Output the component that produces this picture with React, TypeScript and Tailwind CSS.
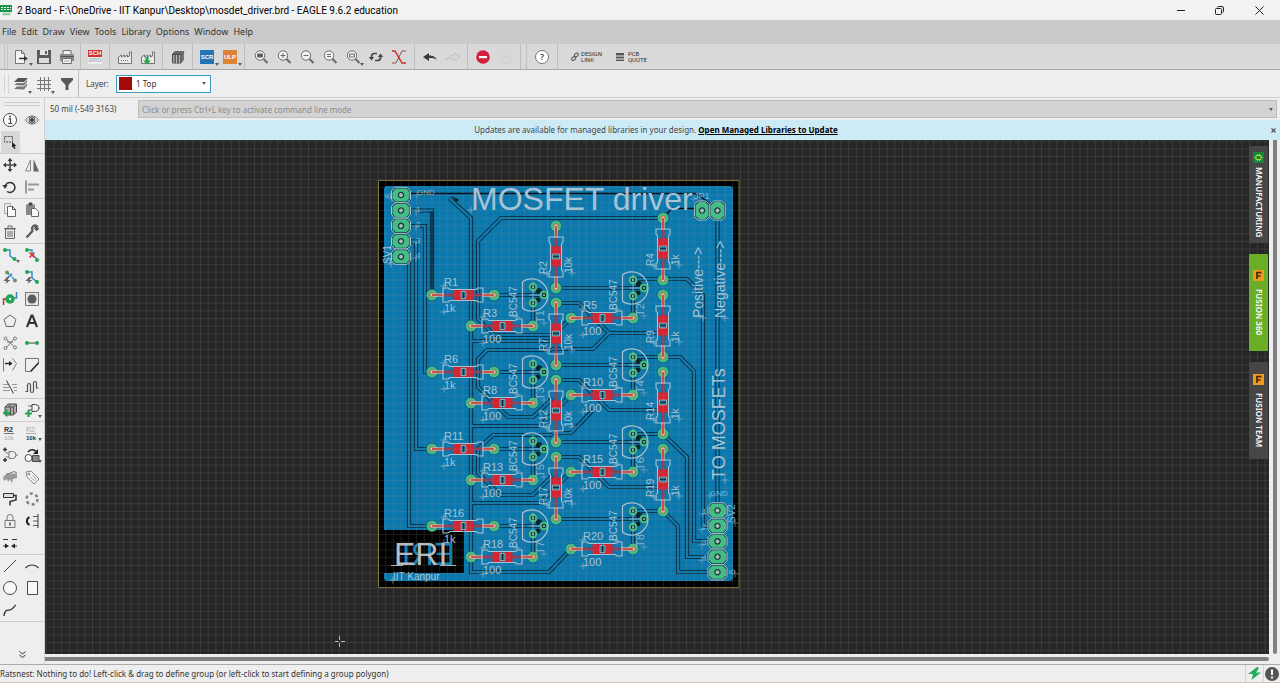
import React, { type ReactNode } from "react";

const PITCH = 15.43;

/* ---------- small building blocks ---------- */

function Ico({ children, stroke = "#4a4a4a", w = 1 }: { children: ReactNode; stroke?: string; w?: number }) {
  return (
    <svg className="size-4 shrink-0" viewBox="0 0 16 16" fill="none" stroke={stroke} strokeWidth={w} aria-hidden="true">
      {children}
    </svg>
  );
}

function Tool({ name, menu, active, children }: { name: string; menu?: boolean; active?: boolean; children: ReactNode }) {
  return (
    <button
      type="button"
      aria-label={name}
      title={name}
      className={`relative flex h-full w-[23px] shrink-0 items-center justify-center ${active ? "bg-[#d8d8d8]" : ""}`}
    >
      {children}
      {menu && (
        <svg className="absolute right-0 bottom-[3px] h-[3px] w-1" viewBox="0 0 5 4" aria-hidden="true">
          <path d="M0 0h5L2.500 4z" fill="#555" />
        </svg>
      )}
    </button>
  );
}

function Group({ className, children }: { className: string; children?: ReactNode }) {
  return <div className={`flex h-full shrink-0 items-center justify-center border-r border-[#bdbdbd] ${className}`}>{children}</div>;
}

function Lens({ children }: { children?: ReactNode }) {
  return (
    <Ico stroke="#6a6a6a">
      <circle cx="7" cy="6.500" r="4.700" fill="#f2f2f2" />
      <path d="M10.500 10l4 4" strokeWidth="1.900" />
      {children}
    </Ico>
  );
}

/* ---------- main toolbar ---------- */

function MainToolbar() {
  return (
    <div role="toolbar" aria-label="Actions" className="flex h-[26px] shrink-0 items-center border-b border-[#a9a9a9] bg-[#d9d9d9]">
      <div className="ml-1 h-full w-1 border-x border-[#c6c6c6]" />
      <Group className="w-[73px]">
        <Tool name="New" menu>
          <Ico stroke="#777">
            <path d="M2.500 1.500h6l3 3v10h-9z" fill="#f4f4f4" />
            <path d="M8.500 1.500v3h3" />
            <path d="M6 9.500h6" stroke="#333" strokeWidth="1.500" />
            <path d="M11 7l4 2.500-4 2.500z" fill="#333" stroke="none" />
          </Ico>
        </Tool>
        <Tool name="Save">
          <Ico stroke="none">
            <path d="M1 1h14v14H1z" fill="#5c5c5c" />
            <path d="M4 1h8v5H4z" fill="#e4e4e4" />
            <path d="M9 2h2v3H9z" fill="#5c5c5c" />
            <path d="M3 9h10v5H3z" fill="#dcdcdc" />
          </Ico>
        </Tool>
        <Tool name="Print">
          <Ico stroke="#6e6e6e">
            <path d="M4 5V1.500h8V5" fill="#efefef" />
            <path d="M1 5h14v7H1z" fill="#8a8a8a" stroke="none" />
            <path d="M1 7.500h14" stroke="#555" />
            <path d="M3.500 9.500h9v5h-9z" fill="#f4f4f4" />
            <path d="M5 12h6" stroke="#aaa" />
          </Ico>
        </Tool>
      </Group>
      <Group className="w-[29px]">
        <Tool name="Schematic">
          <span className="flex w-[14px] flex-col text-center font-['Liberation_Sans'] text-[6px] leading-[7px] font-bold">
            <span className="bg-[#cf2f36] text-white">SCH</span>
            <span className="bg-[#eeeeee] text-[#b4b4b4]">BRD</span>
          </span>
        </Tool>
      </Group>
      <Group className="w-[53px]">
        <Tool name="CAM processor">
          <Ico stroke="#777">
            <path d="M1.500 14.500V8l3-2v2l3-2v2l3-2v2l2-1V3h2v11.500z" fill="#e9e9e9" />
            <path d="M4 11.500h7" strokeDasharray="1 1" />
          </Ico>
        </Tool>
        <Tool name="Generate CAM data">
          <Ico stroke="#777">
            <path d="M1.500 14.500V8l3-2v2l3-2v2l3-2v2l2-1V3h2v11.500z" fill="#e9e9e9" />
            <path d="M5.500 8h3v3.500h2.500L7 15.500 3 11.500h2.500z" fill="#22a848" stroke="none" />
          </Ico>
        </Tool>
      </Group>
      <Group className="w-[30px]">
        <Tool name="Library manager">
          <Ico stroke="#555">
            <path d="M2 5l3-3h9v9l-3 3H2z" fill="#777" stroke="none" />
            <path d="M2.500 5.500h8.500v8.500H2.500zM5 5.500V14M8 5.500V14M11 5.500l3-3M2.500 5.500l3-3M5.500 5l3-3M8.500 5l3-3" stroke="#4c4c4c" />
            <path d="M3.800 6v8M6.500 6v8M9.500 6v8" stroke="#bbb" />
          </Ico>
        </Tool>
      </Group>
      <Group className="w-[52px]">
        <Tool name="Run script" menu>
          <span className="h-[14px] w-[14px] bg-[#2474b8] text-center font-['Liberation_Sans'] text-[6px] leading-[14px] font-bold text-white">SCR</span>
        </Tool>
        <Tool name="Run ULP" menu>
          <span className="h-[14px] w-[14px] bg-[#de8234] text-center font-['Liberation_Sans'] text-[6px] leading-[14px] font-bold text-white">ULP</span>
        </Tool>
      </Group>
      <Group className="w-[170px]">
        <Tool name="Zoom to fit"><Lens><path d="M4.500 5h5v3h-5z" fill="#555" /></Lens></Tool>
        <Tool name="Zoom in"><Lens><path d="M4.500 6.500h5M7 4v5" /></Lens></Tool>
        <Tool name="Zoom out"><Lens><path d="M4.500 6.500h5" /></Lens></Tool>
        <Tool name="Zoom redraw"><Lens><path d="M5 5.500h4M5 7.500h4" /></Lens></Tool>
        <Tool name="Zoom select" menu><Lens><path d="M4.500 5h5v3h-5z" /></Lens></Tool>
        <Tool name="Redraw">
          <Ico stroke="#444" w={1.6}>
            <path d="M3.500 8.500V7a3 3 0 0 1 3-2.500H9M12.500 7.500V9a3 3 0 0 1-3 2.500H7" />
            <path d="M.8 8h5.400L3.500 11.500zM9.800 8h5.400L12.500 4.500z" fill="#444" stroke="none" />
          </Ico>
        </Tool>
        <Tool name="Ratsnest">
          <Ico>
            <path d="M15 2h-4L5 14H1" stroke="#7e5a58" />
            <path d="M1 2h3l7 12h4" stroke="#cf2a20" strokeWidth="1.400" />
          </Ico>
        </Tool>
      </Group>
      <Group className="w-[53px]">
        <Tool name="Undo"><Ico stroke="none"><path d="M1 8l6-4v2.500c4 0 6 1 8 4.500-2-1.800-4-2-8-2V12z" fill="#3a3a3a" /></Ico></Tool>
        <Tool name="Redo"><Ico stroke="#c2c2c2"><path d="M15 8L9 4v2.500C5 6.500 3 7.500 1 11c2-1.800 4-2 8-2V12z" /></Ico></Tool>
      </Group>
      <Group className="w-[53px]">
        <Tool name="Stop">
          <Ico stroke="none"><circle cx="8" cy="8" r="6.800" fill="#d51f3e" /><path d="M4 7h8v2.200H4z" fill="#fff" /></Ico>
        </Tool>
        <Tool name="Go"><Ico stroke="#cecece"><circle cx="8" cy="8" r="6.300" /><path d="M5 8h5M8 5l3 3-3 3" /></Ico></Tool>
      </Group>
      <Group className="w-[6px]" />
      <Group className="w-[31px]">
        <Tool name="Help">
          <span className="flex size-[14px] items-center justify-center rounded-full border border-[#777] bg-white font-['Open_Sans'] text-[9px] leading-none font-semibold text-[#333]">?</span>
        </Tool>
      </Group>
      <button type="button" className="ml-[13px] flex items-center gap-0.5 text-left font-['Roboto'] text-[6px] leading-[6px] text-[#333]">
        <svg className="h-2.5 w-2" viewBox="0 0 8 10" fill="none" stroke="#555" aria-hidden="true">
          <ellipse cx="5.300" cy="3" rx="1.500" ry="2.300" transform="rotate(45 5.300 3)" />
          <ellipse cx="2.700" cy="6.500" rx="1.500" ry="2.300" transform="rotate(45 2.700 6.500)" />
        </svg>
        <span>DESIGN<br />LINK</span>
      </button>
      <button type="button" className="ml-[14px] flex items-center gap-1 text-left font-['Roboto'] text-[6px] leading-[6px] text-[#333]">
        <svg className="size-2" viewBox="0 0 8 8" aria-hidden="true">
          <path d="M0 0h8v8H0z" fill="#a2a2a2" /><path d="M0 0h8v2H0zM0 4h8v1H0zM0 7h8v1H0z" fill="#555" />
        </svg>
        <span>PCB<br />QUOTE</span>
      </button>
    </div>
  );
}

function LayerBar() {
  return (
    <div className="flex h-[28px] shrink-0 items-center border-b border-[#d2d2d2] bg-[#eeeeee]">
      <div className="ml-1 h-5 w-[5px] border-x border-[#d6d6d6]" />
      <Group className="h-6 w-[70px]">
        <Tool name="Layer settings" menu>
          <Ico stroke="none">
            <path d="M5 2h10l-4 4H1z" fill="#555" />
            <path d="M1 9l3-2h7l3-3v2l-3 3.500z" fill="#777" />
            <path d="M1 13l3-2.500h7l3-3v2L11 13.500z" fill="#777" />
          </Ico>
        </Tool>
        <Tool name="Grid" menu><Ico stroke="#777"><path d="M4.500 1v14M8.500 1v14M12.500 1v14M1 4.500h14M1 8.500h14M1 12.500h14" /></Ico></Tool>
        <Tool name="Selection filter"><Ico stroke="none"><path d="M2 2h12v2L9.500 9v5h-3V9L2 4z" fill="#595959" /></Ico></Tool>
      </Group>
      <label htmlFor="layer" className="ml-[7px] w-[30px] text-[8px] text-[#444]">Layer:</label>
      <div className="relative flex h-[18px] w-[95px] items-center border border-[#3b9cc4] bg-white">
        <span className="ml-0.5 size-[13px] shrink-0 bg-[#a30a0a]" />
        <select id="layer" className="h-full w-full appearance-none bg-transparent pl-1 text-[8px] text-[#333] outline-none">
          <option>1 Top</option>
          <option>16 Bottom</option>
        </select>
        <svg className="pointer-events-none absolute right-1 h-[3px] w-1" viewBox="0 0 5 4" aria-hidden="true"><path d="M0 0h5L2.500 4z" fill="#555" /></svg>
      </div>
    </div>
  );
}

/* ---------- tool palette ---------- */

type Item = { name: string; art: ReactNode; menu?: boolean; active?: boolean } | null;
const G = "#1fa850";
const B = "#2a86cc";

const plug = <path d="M5 4.500h3.500a3.500 3.500 0 0 1 0 7H5zM1.500 6h3.500M1.500 10h3.500M12 8h3" />;

const PALETTE: Item[][] = [
  [
    { name: "Info", art: <><circle cx="8" cy="8" r="6.500" fill="#fff" /><path d="M6.500 6.800h2v4.700M6.200 11.500h4" strokeWidth="1.200" /><circle cx="8" cy="4.500" r="1" fill="#444" stroke="none" /></> },
    { name: "Show", art: <><path d="M1.500 8c3.500-5.300 9.500-5.300 13 0-3.500 5.300-9.500 5.300-13 0z" stroke="#666" /><circle cx="8" cy="8" r="3" /><circle cx="8" cy="8" r="1.500" fill="#333" /></> },
    { name: "Group", active: true, art: <><path d="M2.500 2.500h8v5.500h-8z" strokeDasharray="2 1" /><path d="M10 8l4.500 4h-2l1 2.500-1.500.5-1-2.500-1 1z" fill="#222" stroke="none" /></> },
    null,
  ],
  [
    { name: "Move", art: <><path d="M8 3v10M3 8h10" strokeWidth="1.600" /><path d="M8 1l2.500 3h-5zM8 15l2.500-3h-5zM1 8l3-2.500v5zM15 8l-3-2.500v5z" fill="#333" stroke="none" /></> },
    { name: "Mirror", art: <><path d="M6.500 3v11h-5z" stroke="#888" /><path d="M9.500 2v12.500H15z" fill="#666" stroke="none" /></> },
    { name: "Rotate", art: <><path d="M5 12.500a5 5 0 1 0-2-5" strokeWidth="1.500" stroke="#333" /><path d="M.5 6h5L3 10z" fill="#333" stroke="none" /></> },
    { name: "Align", art: <><path d="M2 1.500v13" /><path d="M4 4.500h11v2H4zM4 9.500h6v2H4z" fill="#999" stroke="none" /></> },
  ],
  [
    { name: "Copy", art: <><path d="M2.500 1.500h6v10h-6z" stroke="#aaa" /><path d="M5.500 4.500h5l3 3v7h-8z" fill="#fff" stroke="#666" /><path d="M10.500 4.500v3h3" /></> },
    { name: "Paste", art: <><path d="M2 2.500h9V13H2z" fill="#888" stroke="none" /><path d="M5 1h3v2H5z" fill="#444" /><path d="M7.500 6.500h4l3 3v5h-7z" fill="#fff" stroke="#666" /></> },
    { name: "Delete", art: <path d="M3.500 5h9v9.500h-9zM2 4.500h12M6 4V2h4v2M6 7v6M8 7v6M10 7v6" stroke="#666" /> },
    { name: "Change", art: <path d="M2.500 13.500l6.500-7M9 6.500a2.600 2.600 0 0 1 4-4L11.500 4.500l1 1.200L14.500 4" strokeWidth="2.300" stroke="#5c5c5c" /> },
  ],
  [
    { name: "Route", menu: true, art: <><path d="M3 3h5v6l4 3" stroke={B} strokeWidth="1.400" /><circle cx="3" cy="3" r="2" fill={G} stroke="none" /><circle cx="12.500" cy="12" r="2" fill={G} stroke="none" /></> },
    { name: "Ripup", art: <><path d="M3 3h5l0 4 5 5" stroke={B} strokeWidth="1.300" /><circle cx="3" cy="3" r="2" fill={G} stroke="none" /><circle cx="13" cy="13" r="2" fill={G} stroke="none" /><path d="M5.500 5.500l5 5M10.500 5.500l-5 5" stroke="#d33" strokeWidth="1.600" /></> },
    { name: "Multi route", art: <><circle cx="5" cy="3.500" r="2" fill="#6b9b4a" stroke="none" /><circle cx="13" cy="11.500" r="2" fill="#6b9b4a" stroke="none" /><path d="M6 4l7 7M6 8l4-3" stroke={B} strokeDasharray="2 1" strokeWidth="1.600" /><path d="M5 8L1.500 12h3l-1 3 5-4H5.500l2-3z" fill="#666" stroke="none" /></> },
    { name: "Autorouter", art: <><path d="M3 3h5v6l4 3h2" stroke={B} strokeWidth="1.400" /><circle cx="3" cy="3" r="2" fill={G} stroke="none" /><circle cx="13" cy="13" r="2" fill={G} stroke="none" /><path d="M5 8L1.500 12h3l-1 3 5-4H5.500l2-3z" fill="#666" stroke="none" /></> },
    { name: "Via", art: <><path d="M1.500 14V8h4" stroke="#b33" strokeWidth="1.500" /><path d="M14.500 1v6h-4" stroke={B} strokeWidth="1.500" /><circle cx="8" cy="8" r="4.700" fill={G} stroke="none" /><circle cx="8" cy="8" r="1.200" fill="#fff" stroke="none" /></> },
    { name: "Hole", art: <><path d="M1.500 1.500h13v13h-13z" fill="#e4e4e4" stroke="#777" /><circle cx="8" cy="8" r="4.500" fill="#5c5c5c" stroke="none" /></> },
    { name: "Polygon", art: <path d="M8 2l6 4.500-2.300 7H4.300L2 6.500z" stroke="#666" /> },
    { name: "Text", art: <path d="M3 14L7.500 2.500h1L13 14M5 10h6" stroke="#333" strokeWidth="2.100" /> },
    { name: "Ratsnest", art: <g stroke="#777"><path d="M3.500 3.500l9 8.500M12.500 3.500L4 13M5 7h6" /><circle cx="3.500" cy="3.500" r="1.500" fill="#eee" /><circle cx="13" cy="3.500" r="1.500" fill="#eee" /><circle cx="3.500" cy="13" r="1.500" fill="#eee" /><circle cx="13" cy="12.500" r="1.500" fill="#eee" /></g> },
    { name: "Signal", art: <><path d="M2 8h12" /><circle cx="3" cy="8" r="2" fill={G} stroke="none" /><circle cx="13" cy="8" r="2" fill={G} stroke="none" /></> },
    { name: "Optimize", art: <><path d="M1.500 1.500v13M10.500 1.500l4 5-4 7" stroke="#777" /><path d="M3 6.500h6" stroke="#222" strokeWidth="1.400" /><path d="M7 4l3.500 2.500L7 9z" fill="#222" stroke="none" /></> },
    { name: "Miter", art: <><path d="M1.500 14.500v-13h13v5M1.500 14.500h5" stroke="#777" /><path d="M6.500 14.500l8-8.500" strokeWidth="1.500" stroke="#222" /></> },
    { name: "Split", art: <><path d="M1 5.500h5M1 8.500h6M1 11.500h7M10 5.500h5M11 8.500h4M12 11.500h3" stroke="#999" /><path d="M4.500 1.500l7 13" stroke="#333" /></> },
    { name: "Meander", art: <path d="M1.500 12.500h2V6a1.500 1.500 0 0 1 3 0v6a1.500 1.500 0 0 0 3 0V4a1.500 1.500 0 0 1 3 0v5h2" stroke="#555" strokeWidth="1.200" /> },
  ],
  [
    { name: "Add part", art: <><path d="M3 5l3-3h8.500v8l-3 3H3z" fill="#aaa" /><path d="M3 5h8.500v8M11.500 5l3-3M6 5l3-3M8.500 5V13" stroke="#555" /><path d="M1 11h7M4.500 7.500v7" stroke={G} strokeWidth="2.200" /></> },
    { name: "Add symbol", menu: true, art: <><g transform="translate(3 -2)">{plug}</g><path d="M1 11.500h7M4.500 8v7" stroke={G} strokeWidth="2.200" /></> },
  ],
  [
    { name: "Name", art: <><text x="2" y="7" fontSize="7" fontWeight="700" fontFamily="Liberation Sans" fill="#333" stroke="none">R2</text><path d="M2 8.500h10" stroke="#777" /><text x="2" y="15" fontSize="6" fontFamily="Liberation Sans" fill="#aaa" stroke="none">10k</text></> },
    { name: "Value", menu: true, art: <><text x="2" y="7" fontSize="7" fontFamily="Liberation Sans" fill="#aaa" stroke="none">R2</text><path d="M2 8.500h10" stroke="#aaa" /><text x="2" y="15" fontSize="6" fontWeight="700" fontFamily="Liberation Sans" fill="#333" stroke="none">10k</text></> },
    { name: "Smash", art: <><path d="M1 2.500h4M3 .5v4M1 13h4M3 11v4" stroke="#333" strokeWidth="1.400" /><g transform="translate(2 0)" stroke="#777">{plug}</g></> },
    { name: "Replace", menu: true, art: <><circle cx="4.500" cy="11" r="3.500" fill="#fff" /><path d="M8.500 8.500H15v6H8.500z" fill="#888" /><path d="M4 5c2-3 6-3 8-.5" stroke="#222" strokeWidth="1.500" /><path d="M14 2v5H9z" fill="#222" stroke="none" /></> },
    { name: "Pinswap", art: <><path d="M1 8l4-3.500h10V9l-4 1-1 4-2-3.500L6 13l-1-3-3 2z" fill="#999" stroke="none" /><path d="M4 5.500l8-3 3 1.500" stroke="#777" /></> },
    { name: "Attribute", art: <><path d="M2 3l5-1 8 8-5 5-7-7z" fill="#f7f7f7" stroke="#888" /><circle cx="5" cy="5" r="1" stroke="#777" /><path d="M6.500 8l4 4M8.500 6.500l4 4" stroke="#999" /></> },
    { name: "Paint", art: <><path d="M1.500 2.500h10v4h-10z" fill="#ddd" stroke="#333" /><path d="M11.500 4.500H14V9L8 10.500V14.500" stroke="#333" strokeWidth="1.500" /></> },
    { name: "Arrange", art: <circle cx="8" cy="8" r="5.500" stroke="#808080" strokeWidth="2.500" strokeDasharray="3 2.760" /> },
    { name: "Lock", art: <><path d="M3 7.500h10v7H3zM5 7V4.500a3 3 0 0 1 6 0V7" stroke="#777" /><path d="M8 9.500v3" strokeWidth="1.500" /></> },
    { name: "Flip", art: <><path d="M5.500 4c-3.500 2-3.500 6 0 8" stroke="#222" strokeWidth="2" /><path d="M9 3.500h5M9 8h5M9 12.500h5M14 1v14" stroke="#555" strokeWidth="1.200" /></> },
    { name: "Gap", art: <><path d="M1 4.500h5M10 4.500h5M1 11h3M12 11h3" stroke="#333" /><path d="M3 8.500L7 11l-4 2.500zM13 8.500L9 11l4 2.500z" fill="#222" stroke="none" /></> },
    null,
  ],
  [
    { name: "Line", art: <path d="M2 14L14 2" stroke="#444" /> },
    { name: "Arc", art: <path d="M1.500 10c3.500-4 9.500-4 13 0" stroke="#444" strokeWidth="1.200" /> },
    { name: "Circle", art: <circle cx="8" cy="8" r="6.500" fill="#f8f8f8" /> },
    { name: "Rectangle", art: <path d="M3.500 1.500h10v13h-10z" fill="#f8f8f8" /> },
    { name: "Spline", art: <path d="M2 14c1-8 4-5 7-6.500C12 6 12 4 14 3" stroke="#333" strokeWidth="1.300" /> },
    null,
  ],
];

function Palette() {
  return (
    <aside role="toolbar" aria-label="Tools" className="flex w-[45px] shrink-0 flex-col border-r border-[#d0d0d0] bg-[#eeeeee]">
      <div className="mx-1 mt-[4px] mb-[3px] h-[4px] shrink-0 border-y border-[#cccccc]" />
      {PALETTE.map((items, i) => (
        <div key={i} className="grid shrink-0 grid-cols-[20px_24px] border-b border-[#cccccc]">
          {items.map((it, j) => (
            <div key={j} className="flex h-[22px] justify-center [&>button]:w-[19px]">
              {it && (
                <Tool name={it.name} menu={it.menu} active={it.active}>
                  <Ico>{it.art}</Ico>
                </Tool>
              )}
            </div>
          ))}
        </div>
      ))}
      <button type="button" aria-label="More tools" className="mt-auto mb-1 flex h-3 shrink-0 items-center justify-center">
        <svg className="size-[7px]" viewBox="0 0 7 7" fill="none" stroke="#333" aria-hidden="true"><path d="M.5.500l3 2.500 3-2.500M.5 4l3 2.500 3-2.500" /></svg>
      </button>
    </aside>
  );
}

/* ---------- circuit board ---------- */

const TRACES = [
  "M401 210.500H432V295",
  "M401 226H425V372H432",
  "M401 241.500H416V449H432",
  "M401 257H409V526H432",
  "M449 198L471 218V572H549L571 549",
  "M663 218H501L478 241V319L494 335H552",
  "M471 341H552",
  "M552 350H487L478 359V387L508 417H533L553 398",
  "M471 426H540L553 413",
  "M552 435H493L478 449V473L500 495H533L553 475",
  "M471 503H540L553 490",
  "M556 303H579L609 333H663M609 333L593 349H552",
  "M556 380H579L609 410H663M593 410L571 433H552",
  "M556 457H579L609 487H663",
  "M571 318L552 337",
  "M571 395L552 414",
  "M571 472L552 491",
  "M494 295H544",
  "M494 372H544",
  "M494 449H544",
  "M494 526H544",
  "M556 288H645",
  "M556 365H645",
  "M556 442H645",
  "M556 519H645",
  "M533 303V326",
  "M533 380V403",
  "M533 457V480",
  "M533 534V557",
  "M633 295V318",
  "M633 372V395",
  "M633 449V472",
  "M633 526V549",
  "M633 279H687L703 295V526H717",
  "M633 357H680L694 371V541H717",
  "M633 434H663L687 457V557H717",
  "M633 511H663L678 526V572H717",
  "M717.500 210V572",
].join("");

const SILK = "#a8c6d8";
const PAD = "#43bd86";

type Part = { x: number; y: number; name: string; value: string; up?: boolean };
const RESISTORS: Part[] = [
  { x: 463, y: 295, name: "R1", value: "1k" },
  { x: 502, y: 326, name: "R3", value: "100" },
  { x: 463, y: 372, name: "R6", value: "1k" },
  { x: 502, y: 403, name: "R8", value: "100" },
  { x: 463, y: 449, name: "R11", value: "1k" },
  { x: 502, y: 480, name: "R13", value: "100" },
  { x: 463, y: 526, name: "R16", value: "1k" },
  { x: 502, y: 557, name: "R18", value: "100" },
  { x: 602, y: 318, name: "R5", value: "100" },
  { x: 602, y: 395, name: "R10", value: "100" },
  { x: 602, y: 472, name: "R15", value: "100" },
  { x: 602, y: 549, name: "R20", value: "100" },
  { x: 556, y: 257, name: "R2", value: "10k", up: true },
  { x: 556, y: 334, name: "R7", value: "10k", up: true },
  { x: 556, y: 411, name: "R12", value: "10k", up: true },
  { x: 556, y: 488, name: "R17", value: "10k", up: true },
  { x: 663, y: 249, name: "R4", value: "1k", up: true },
  { x: 663, y: 326, name: "R9", value: "1k", up: true },
  { x: 663, y: 403, name: "R14", value: "1k", up: true },
  { x: 663, y: 480, name: "R19", value: "1k", up: true },
];

const TRANSISTORS: Part[] = [
  { x: 533, y: 295, name: "T1", value: "BC547" },
  { x: 533, y: 372, name: "T3", value: "BC547" },
  { x: 533, y: 449, name: "T5", value: "BC547" },
  { x: 533, y: 526, name: "T7", value: "BC547" },
  { x: 633, y: 288, name: "T2", value: "BC547" },
  { x: 633, y: 365, name: "T4", value: "BC547" },
  { x: 633, y: 442, name: "T6", value: "BC547" },
  { x: 633, y: 519, name: "T8", value: "BC547" },
];

function Label({ x, y, size = 10, up, dim, children }: { x: number; y: number; size?: number; up?: boolean; dim?: boolean; children: ReactNode }) {
  return (
    <g transform={`translate(${x} ${y})${up ? " rotate(-90)" : ""}`} opacity={dim ? 0.8 : 1}>
      <path d="M-3.500 0h7M0-3.500v7" stroke={SILK} strokeWidth="0.800" opacity="0.750" />
      <text fontSize={size} fill={SILK} stroke="none">{children}</text>
    </g>
  );
}

function Resistor({ x, y, name, value, up }: Part) {
  return (
    <g>
      <g transform={`translate(${x} ${y})${up ? " rotate(-90)" : ""}`}>
        <circle cx="-31" r="5.800" fill={PAD} stroke="#07566a" strokeWidth="0.600" />
        <circle cx="31" r="5.800" fill={PAD} stroke="#07566a" strokeWidth="0.600" />
        <circle cx="-31" r="2.200" fill="#e6d3b0" stroke="#b9603c" />
        <circle cx="31" r="2.200" fill="#e6d3b0" stroke="#b9603c" />
        <path d="M-31 0h12M19 0h12" stroke="#c9b3a4" strokeWidth="3.400" />
        <path d="M-31 0h12M19 0h12" stroke="#cf2f28" strokeWidth="1.600" />
        <path d="M-19 0h10M9 0h10" stroke="#8d3c58" strokeWidth="3" />
        <path d="M-9.500-5h9v10h-9zM1.500-5h9v10h-9z" fill="#d32230" />
        <path d="M-2-3.500h5v7h-5z" fill="#216f86" stroke={SILK} strokeWidth="0.700" />
        <path d="M.5-3v6" stroke="#10242c" />
        <path d="M-20-7h5l2 1.500h26l2-1.500h5v14h-5l-2-1.500h-26l-2 1.500h-5z" fill="none" stroke={SILK} strokeWidth="1.100" />
      </g>
      {up ? (
        <>
          <Label x={x - 9} y={y + 17} up>{name}</Label>
          <Label x={x + 16} y={y + 16} up>{value}</Label>
        </>
      ) : (
        <>
          <Label x={x - 19} y={y - 9} size={11}>{name}</Label>
          <Label x={x - 19} y={y + 17} size={11}>{value}</Label>
        </>
      )}
    </g>
  );
}

function Transistor({ x, y, name, value }: Part) {
  return (
    <g>
      <g transform={`translate(${x} ${y})`}>
        <circle cx="6" cy="-4" r="3" fill="#06202c" />
        <circle cx="5" cy="5" r="2.500" fill="#06202c" />
        {[[0, -8], [0, 8], [11, 0]].map(([cx, cy]) => (
          <g key={`${cx}${cy}`}>
            <circle cx={cx} cy={cy} r="4.600" fill="#06303c" />
            <circle cx={cx} cy={cy} r="3.400" fill="none" stroke={PAD} strokeWidth="2.200" />
            <circle cx={cx} cy={cy} r="1" fill="#9fc4b4" />
          </g>
        ))}
        <path d="M-10.500-13v26C-6 17 3 17.500 9 12.500 17 5.500 17-5.500 9-12.500 3-17.500-6-17-10.500-13z" fill="none" stroke={SILK} strokeWidth="1.200" />
        <path d="M0-13v26M-4 0h12" stroke={SILK} strokeWidth="0.700" />
      </g>
      <Label x={x - 16} y={y + 22} up>{value}</Label>
      <Label x={x + 11} y={y + 28} up size={11} dim>{name}</Label>
    </g>
  );
}

function Header({ x, y, count, side }: { x: number; y: number; count: number; side?: boolean }) {
  return (
    <g transform={`translate(${x} ${y})${side ? " rotate(90)" : ""}`}>
      {Array.from({ length: count }, (_, k) => (
        <g key={k} transform={`translate(0 ${k * PITCH})`}>
          <path d="M-9.500-4l3.500-3.700H6L9.500-4v8L6 7.700H-6L-9.500 4z" fill="#0c3a45" stroke={SILK} strokeWidth="1" />
          <path d="M-8.500-3l3-3.500h11l3 3.500v6l-3 3.500h-11l-3-3.500z" fill={PAD} />
          <circle r="2.600" fill="#a9c9b8" stroke="#12343a" strokeWidth="1.300" />
        </g>
      ))}
    </g>
  );
}

function BoardCanvas() {
  return (
    <svg className="block h-full w-full font-['Liberation_Sans',sans-serif]" role="img" aria-label="Board layout">
      <defs>
        <pattern id="grid" width="7.715" height="7.715" patternUnits="userSpaceOnUse" x="400.600" y="194.600">
          <path d="M.5 0v8M0 .5h8" stroke="#8c8c8c" strokeWidth="1" />
        </pattern>
      </defs>
      <g transform="translate(-45 -140)">
        <path d="M378.500 180.500h360.500v407h-360.500z" fill="#000" stroke="#7d6d2c" />
        <path d="M386 186h345l2 2v391l-2 2H386l-2-2v-6h80v-43h-80V188z" fill="#0b78ad" />
        <path d={TRACES} fill="none" stroke="#06202f" strokeWidth="4.200" />
        <path d={TRACES} fill="none" stroke="#0b78ad" strokeWidth="2.500" />
        <path d="M401 193.500H696L712 205M663 218L672 208.500H702M432 211V290" fill="none" stroke="#020a10" strokeWidth="1.300" />
        <path d="M452 196l7 4-3 2z" fill="#04141f" />

        {RESISTORS.map((p) => <Resistor key={p.name} {...p} />)}
        {TRANSISTORS.map((p) => <Transistor key={p.name} {...p} />)}
        <Header x={401} y={195} count={5} />
        <Header x={717.5} y={510.5} count={5} />
        <Header x={717.5} y={210.5} count={2} side />

        <Label x={471} y={210} size={32}>MOSFET driver</Label>
        <Label x={694} y={199} size={9} dim>JP1</Label>
        <Label x={703} y={318} size={14} up>Positive---&gt;</Label>
        <Label x={725} y={318} size={14} up>Negative---&gt;</Label>
        <Label x={725} y={480} size={18} up>TO MOSFETs</Label>
        <Label x={417} y={195} size={8} dim>GND</Label>
        <Label x={710} y={496} size={8} dim>GND</Label>
        <Label x={391} y={264} up>SV1</Label>
        <Label x={735} y={523} up dim>SV2</Label>
        <Label x={391} y={198} size={9} up dim>5</Label>
        <Label x={735} y={574} size={9} up dim>5</Label>
        {["1", "2", "3", "4"].map((n, k) => (
          <g key={n}>
            <Label x={416} y={212 + k * PITCH} size={8} dim>{n}</Label>
            <Label x={702} y={514 + k * PITCH} size={8} dim>{n}</Label>
          </g>
        ))}
        <text transform="translate(455 565) scale(-1 1)" fontSize="32" fill="#1481b4">ERI</text>
        <text x="394" y="565" fontSize="32" fill="#b9bcc0">ERI</text>
        <path d="M391 565.500h12M440 565.500h16" stroke="#a9bac4" strokeWidth="1.200" />
        <Label x={393} y={580}>IIT Kanpur</Label>
        <rect x="45" y="140" width="100%" height="100%" fill="url(#grid)" opacity="0.200" />
        <path d="M335 641.500h3.500M341 641.500h4M339.500 636v4M339.500 643v4" stroke="#bbb" />
      </g>
    </svg>
  );
}

function SideTab({ label, green, chip }: { label: string; green?: boolean; chip?: boolean }) {
  return (
    <button
      type="button"
      className={`flex h-[97px] w-[19px] flex-col items-center justify-center font-['Noto_Sans'] text-[8px] leading-none font-semibold text-white ${green ? "bg-[#6aae27]" : "bg-[#464646]"} ${chip ? "gap-1" : "gap-2"}`}
    >
      <svg className="size-[11px] shrink-0" viewBox="0 0 11 11" aria-hidden="true">
        {chip ? (
          <>
            <path d="M0 0h11v11H0z" fill="#17853a" />
            <path d="M3 3.500h5v4H3zM4.500 2v1.500M6.500 2v1.500M4.500 7.500V9M6.500 7.500V9M1.500 5.500H3M8 5.500h1.500" fill="none" stroke="#a8d838" />
          </>
        ) : (
          <>
            <path d="M0 0h11v11H0z" fill="#f09a21" />
            <path d="M4 9V2.700h4.500M4 6h3.700" fill="none" stroke="#4a2a08" strokeWidth="1.700" />
          </>
        )}
      </svg>
      <span className="[writing-mode:vertical-rl]">{label}</span>
    </button>
  );
}

/* ---------- window ---------- */

const MENUS = ["File", "Edit", "Draw", "View", "Tools", "Library", "Options", "Window", "Help"];

export default function App() {
  return (
    <div className="flex h-screen flex-col overflow-hidden bg-[#eeeeee] font-['Noto_Sans',sans-serif] text-[8px] text-[#444]">
      <header className="flex h-5 shrink-0 items-center bg-[#f3f3f3] text-black">
        <svg className="h-3 w-3 shrink-0" viewBox="0 0 12 12" aria-hidden="true">
          <path d="M0 1h12v7H0z" fill="#169447" /><path d="M2 8h9v4H2z" fill="#d6e6da" />
          <path d="M1 3.500h10M1 5.500h10" stroke="#fff" strokeDasharray="2 1" /><path d="M3 10h7" stroke="#57a873" />
        </svg>
        <h1 className="ml-[5px] font-['Roboto'] text-[10px] whitespace-nowrap">2 Board - F:\OneDrive - IIT Kanpur\Desktop\mosdet_driver.brd - EAGLE 9.6.2 education</h1>
        <div className="ml-auto flex h-full">
          <button type="button" aria-label="Minimize" className="flex w-[39px] items-center justify-center"><svg className="size-2" viewBox="0 0 8 8"><path d="M0 4.500h8" stroke="#222" /></svg></button>
          <button type="button" aria-label="Restore" className="flex w-[39px] items-center justify-center"><svg className="size-[9px]" viewBox="0 0 9 9" fill="none" stroke="#222"><rect x=".5" y="2.500" width="6" height="6" rx="1" /><path d="M2.500 1.500a1 1 0 0 1 1-1H7A1.500 1.500 0 0 1 8.500 2v3.500a1 1 0 0 1-1 1" /></svg></button>
          <button type="button" aria-label="Close" className="flex w-[41px] items-center justify-center"><svg className="size-[9px]" viewBox="0 0 9 9"><path d="M.5.500l8 8M8.500.500l-8 8" stroke="#222" /></svg></button>
        </div>
      </header>

      <nav className="flex h-6 shrink-0 items-center gap-[5px] bg-[#cacaca] pl-0.5 text-[9px] text-[#333]">
        {MENUS.map((m) => <button key={m} type="button">{m}</button>)}
      </nav>

      <MainToolbar />
      <LayerBar />

      <div className="flex min-h-0 flex-1">
        <Palette />
        <main className="flex min-w-0 flex-1 flex-col">
          <div className="flex h-[22px] shrink-0 items-center pr-[3px]">
            <span className="w-[93px] shrink-0 pl-[5px] text-[8px]">50 mil (-549 3163)</span>
            <div className="relative flex h-[18px] flex-1 items-center">
              <input
                aria-label="Command line"
                placeholder="Click or press Ctrl+L key to activate command line mode"
                className="h-full w-full border border-[#bcbcbc] bg-[#d3d3d3] px-[3px] text-[8px] outline-none placeholder:text-[#8b8b8b]"
              />
              <svg className="absolute right-1 h-[3px] w-1" viewBox="0 0 5 4" aria-hidden="true"><path d="M0 0h5L2.500 4z" fill="#555" /></svg>
            </div>
          </div>
          <div className="flex h-5 shrink-0 items-center bg-[#cdebf7]">
            <p className="flex-1 text-center">
              Updates are available for managed libraries in your design.{" "}
              <a href="#update" className="font-bold text-black underline">Open Managed Libraries to Update</a>
            </p>
            <button type="button" aria-label="Dismiss" className="flex w-[13px] justify-center">
              <svg className="size-[5px]" viewBox="0 0 5 5"><path d="M.5.500l4 4M4.500.500l-4 4" stroke="#555" strokeWidth="1.300" /></svg>
            </button>
          </div>
          <div className="flex min-h-0 flex-1">
            <div className="relative min-w-0 flex-1 overflow-hidden bg-[#262626]">
              <BoardCanvas />
              <div className="absolute top-1.5 right-px flex flex-col gap-[11px]">
                <SideTab label="MANUFACTURING" chip />
                <SideTab label="FUSION 360" green />
                <SideTab label="FUSION TEAM" />
              </div>
            </div>
            <div className="flex w-[11px] justify-center"><div className="w-1 rounded-b bg-[#808080]" /></div>
          </div>
          <div className="flex h-2.5 shrink-0 items-center pr-[11px]"><div className="h-1 flex-1 rounded-r bg-[#808080]" /></div>
        </main>
      </div>

      <footer className="flex h-[19px] shrink-0 items-center border-t border-b border-t-[#ababab] border-b-[#d9c4b8] text-[#333]">
        <span className="flex-1 text-[8px]">Ratsnest: Nothing to do! Left-click &amp; drag to define group (or left-click to start defining a group polygon)</span>
        <span className="flex h-full w-[19px] items-center justify-center border-x border-[#d4d4d4]">
          <svg className="size-[13px]" viewBox="0 0 13 13" aria-hidden="true"><path d="M9 0L0 7h5L3.500 13 13 5.500H8L11 1z" fill="#22ad5a" /></svg>
        </span>
        <svg className="mx-px size-[14px]" viewBox="0 0 14 14" aria-hidden="true"><circle cx="7" cy="7" r="7" fill="#555" /><path d="M7 2.500v5.500M7 9.500v2" stroke="#fff" strokeWidth="2" /></svg>
      </footer>
    </div>
  );
}
